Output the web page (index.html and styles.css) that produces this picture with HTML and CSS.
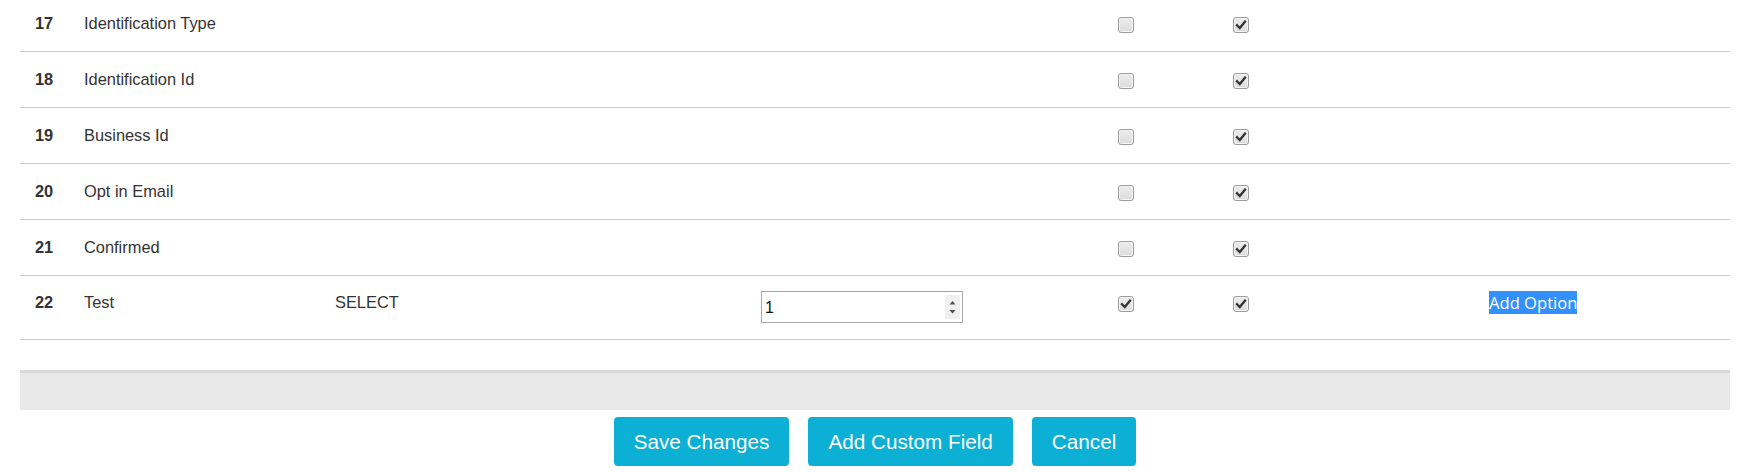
FILE: index.html
```html
<!DOCTYPE html>
<html lang="en">
<head>
<meta charset="utf-8">
<title>Custom Fields</title>
<link rel="stylesheet" href="styles.css">
</head>
<body>
<div class="page">
  <div class="fields">
    <div class="row">
      <div class="num">17</div>
      <div class="label">Identification Type</div>
      <div class="type"></div>
      <div class="order"></div>
      <div class="cell"><span class="cb"></span></div>
      <div class="cell"><span class="cb checked"><svg viewBox="0 0 16 16" width="16" height="16"><path d="M4 8.2 L6.8 11 L12 4.6" fill="none" stroke="#333" stroke-width="2.3" stroke-linecap="square"/></svg></span></div>
      <div class="opt"></div>
    </div>
    <div class="row">
      <div class="num">18</div>
      <div class="label">Identification Id</div>
      <div class="type"></div>
      <div class="order"></div>
      <div class="cell"><span class="cb"></span></div>
      <div class="cell"><span class="cb checked"><svg viewBox="0 0 16 16" width="16" height="16"><path d="M4 8.2 L6.8 11 L12 4.6" fill="none" stroke="#333" stroke-width="2.3" stroke-linecap="square"/></svg></span></div>
      <div class="opt"></div>
    </div>
    <div class="row">
      <div class="num">19</div>
      <div class="label">Business Id</div>
      <div class="type"></div>
      <div class="order"></div>
      <div class="cell"><span class="cb"></span></div>
      <div class="cell"><span class="cb checked"><svg viewBox="0 0 16 16" width="16" height="16"><path d="M4 8.2 L6.8 11 L12 4.6" fill="none" stroke="#333" stroke-width="2.3" stroke-linecap="square"/></svg></span></div>
      <div class="opt"></div>
    </div>
    <div class="row">
      <div class="num">20</div>
      <div class="label">Opt in Email</div>
      <div class="type"></div>
      <div class="order"></div>
      <div class="cell"><span class="cb"></span></div>
      <div class="cell"><span class="cb checked"><svg viewBox="0 0 16 16" width="16" height="16"><path d="M4 8.2 L6.8 11 L12 4.6" fill="none" stroke="#333" stroke-width="2.3" stroke-linecap="square"/></svg></span></div>
      <div class="opt"></div>
    </div>
    <div class="row">
      <div class="num">21</div>
      <div class="label">Confirmed</div>
      <div class="type"></div>
      <div class="order"></div>
      <div class="cell"><span class="cb"></span></div>
      <div class="cell"><span class="cb checked"><svg viewBox="0 0 16 16" width="16" height="16"><path d="M4 8.2 L6.8 11 L12 4.6" fill="none" stroke="#333" stroke-width="2.3" stroke-linecap="square"/></svg></span></div>
      <div class="opt"></div>
    </div>
    <div class="row row-edit">
      <div class="num">22</div>
      <div class="label">Test</div>
      <div class="type">SELECT</div>
      <div class="order">
        <div class="numbox">
          <span class="numval">1</span>
          <span class="spin">
            <svg viewBox="0 0 15 24" width="15" height="24"><path d="M4.5 9.5 L7.5 6 L10.5 9.5 Z" fill="#505050"/><path d="M4.5 15 L7.5 18.5 L10.5 15 Z" fill="#505050"/></svg>
          </span>
        </div>
      </div>
      <div class="cell"><span class="cb checked"><svg viewBox="0 0 16 16" width="16" height="16"><path d="M4 8.2 L6.8 11 L12 4.6" fill="none" stroke="#333" stroke-width="2.3" stroke-linecap="square"/></svg></span></div>
      <div class="cell"><span class="cb checked"><svg viewBox="0 0 16 16" width="16" height="16"><path d="M4 8.2 L6.8 11 L12 4.6" fill="none" stroke="#333" stroke-width="2.3" stroke-linecap="square"/></svg></span></div>
      <div class="opt"><span class="addopt">Add Option</span></div>
    </div>
  </div>
  <div class="band"></div>
  <div class="actions">
    <button class="btn">Save Changes</button>
    <button class="btn">Add Custom Field</button>
    <button class="btn">Cancel</button>
  </div>
</div>
</body>
</html>
```
FILE: styles.css
```css
html, body {
  margin: 0;
  padding: 0;
  background: #fff;
  overflow: hidden;
}
body {
  font-family: "Liberation Sans", Arial, Helvetica, sans-serif;
  color: #333;
  font-size: 16.4px;
}
.page {
  margin: -4px 31px 0 20px;
}
.row {
  display: grid;
  grid-template-columns: 64px 251px 426px 357px 115px 256px 1fr;
  align-items: start;
  padding: 16px 0;
  line-height: 23px;
  border-bottom: 1px solid #cfcfcf;
}
.row-edit {
  padding: 15px 0 16px;
}
.num {
  font-weight: bold;
  padding-left: 15px;
}
.label, .type {
  white-space: nowrap;
}
.cell {
  height: 23px;
}
.cb {
  display: block;
  box-sizing: border-box;
  width: 16px;
  height: 16px;
  margin-top: 5px;
  border: 1px solid #9c9c9c;
  border-radius: 3px;
  background: linear-gradient(#ececec, #dcdcdc);
  box-shadow: inset 0 0 0 1px #f4f4f4;
  position: relative;
}
.cb svg {
  display: block;
  margin: -1px 0 0 -1px;
}
.numbox {
  box-sizing: border-box;
  width: 202px;
  height: 32px;
  border: 1px solid #a9a9a9;
  display: flex;
  align-items: center;
  justify-content: space-between;
  padding: 0 2px 0 3px;
  background: #fff;
}
.numval {
  color: #111;
  font-size: 16px;
}
.spin {
  display: block;
  width: 15px;
  height: 24px;
  background: #f0f0f0;
}
.spin svg {
  display: block;
}
.addopt {
  font-family: "Open Sans", "Noto Sans", sans-serif;
  font-size: 16.6px;
  background: #3390ff;
  color: #fff;
}
.band {
  margin-top: 30px;
  height: 37px;
  border-top: 3px solid #d9d9d9;
  background: #e9e9e9;
}
.actions {
  display: flex;
  justify-content: center;
  gap: 19px;
  margin-top: 7px;
}
.btn {
  height: 49px;
  padding: 0 20px;
  border: none;
  border-radius: 4px;
  background: #0bb0d4;
  color: #fff;
  font-family: "Liberation Sans", Arial, Helvetica, sans-serif;
  font-size: 20.7px;
  line-height: 49px;
  cursor: pointer;
}
```
